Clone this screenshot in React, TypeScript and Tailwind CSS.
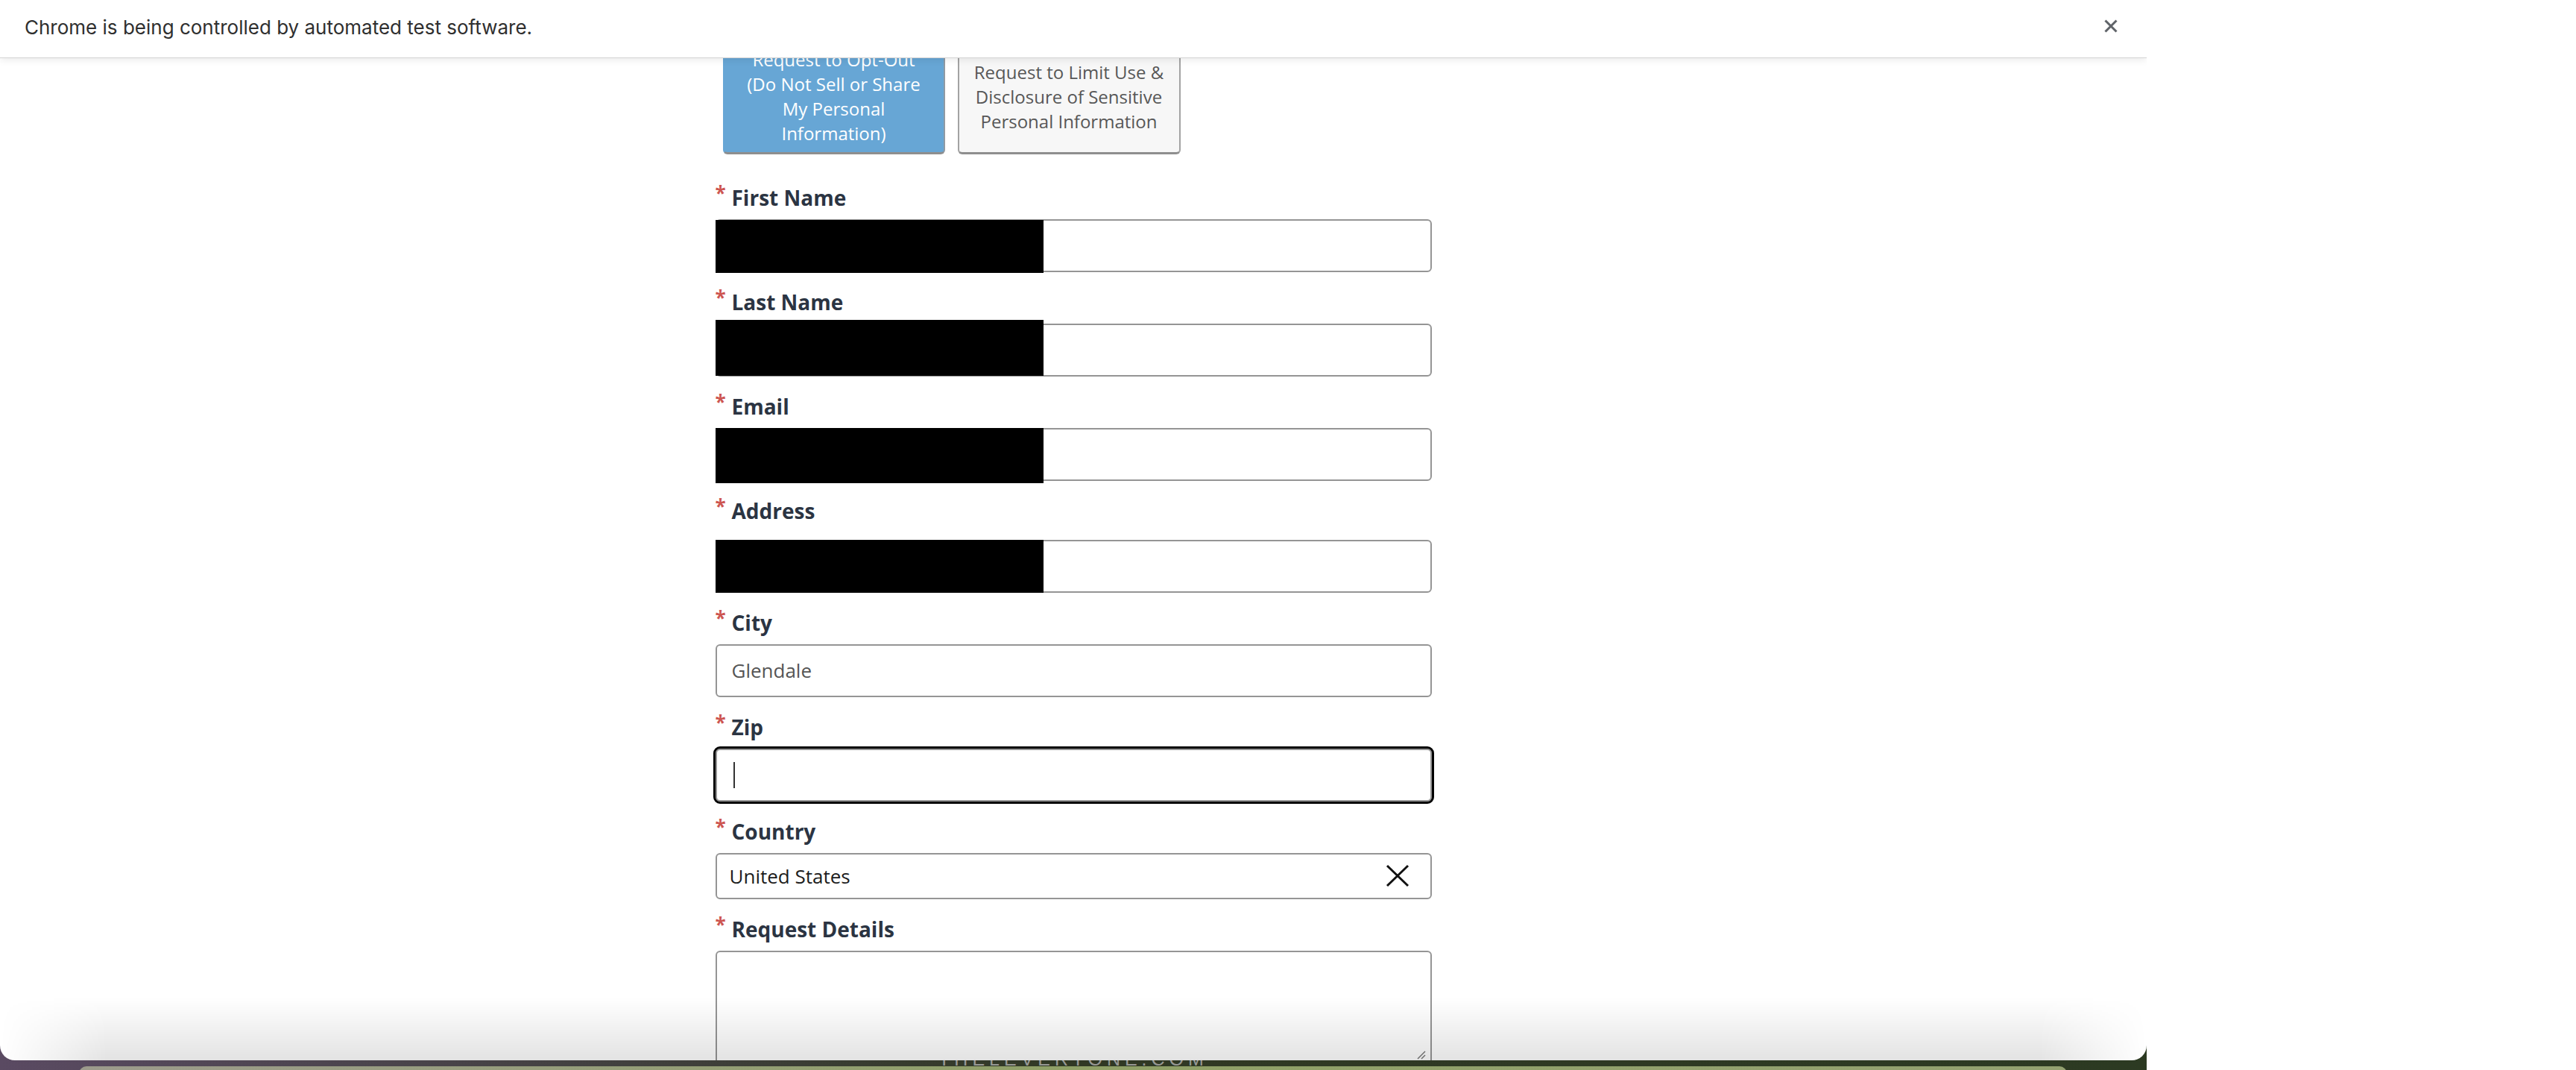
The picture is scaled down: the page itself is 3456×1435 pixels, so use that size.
import React from "react"

type Field = {
  label: string
  kind: "redacted" | "text" | "focus" | "select" | "textarea"
  value?: string
  gap?: number
  redact?: string
}

const fields: Field[] = [
  { label: "First Name", kind: "redacted", redact: "top-[-1px] bottom-[-3px]" },
  { label: "Last Name", kind: "redacted", redact: "top-[-7px] bottom-[-1px]" },
  { label: "Email", kind: "redacted", redact: "top-[-2px] bottom-[-5px]" },
  { label: "Address", kind: "redacted", gap: 19, redact: "top-[-2px] bottom-[-2px]" },
  { label: "City", kind: "text", value: "Glendale" },
  { label: "Zip", kind: "focus" },
  { label: "Country", kind: "select", value: "United States" },
  { label: "Request Details", kind: "textarea" },
]

function Label({ text }: { text: string }) {
  return (
    <div className="h-[40px] leading-[40px] text-[28px] font-bold text-[#2b3442] whitespace-nowrap">
      <span className="relative top-[-7px] inline-block w-[22px] text-[26px] font-bold text-[#cd5651]">*</span>
      {text}
    </div>
  )
}

function Control({ field }: { field: Field }) {
  const box = "relative w-full rounded-[6px] border-2 border-[#959595] bg-white"
  if (field.kind === "redacted") {
    return (
      <div className={`${box} h-[71px]`}>
        <div className={`absolute left-[-2px] w-[440px] bg-black ${field.redact}`} />
      </div>
    )
  }
  if (field.kind === "text") {
    return (
      <div className={`${box} h-[71px] flex items-center pl-[20px] text-[26px] text-[#555555]`}>{field.value}</div>
    )
  }
  if (field.kind === "focus") {
    return (
      <div className={`${box} h-[71px] flex items-center pl-[22px] outline-[3px] outline-solid outline-black`}>
        <div className="w-[2px] h-[35px] bg-[#333333]" />
      </div>
    )
  }
  if (field.kind === "select") {
    return (
      <div className={`${box} h-[62px] flex items-center justify-between pl-[17px] pr-[28px] text-[26px] text-[#1c1c1c]`}>
        <span>{field.value}</span>
        <svg width="32" height="31" viewBox="0 0 32 31" className="mt-[-2px]">
          <line x1="2" y1="2" x2="30" y2="29" stroke="#111" strokeWidth="3" />
          <line x1="30" y1="2" x2="2" y2="29" stroke="#111" strokeWidth="3" />
        </svg>
      </div>
    )
  }
  return (
    <div className={`${box} h-[220px]`}>
      <svg width="12" height="12" viewBox="0 0 12 12" className="absolute right-[6px] top-[132px]">
        <line x1="11" y1="1" x2="1" y2="11" stroke="#777" strokeWidth="1.5" />
        <line x1="11" y1="6" x2="6" y2="11" stroke="#777" strokeWidth="1.5" />
      </svg>
    </div>
  )
}

export default function App() {
  return (
    <div className="flex w-[3456px] h-[1435px] bg-white overflow-hidden font-['Open_Sans',sans-serif]">
      <div className="relative w-[2880px] h-full flex flex-col bg-linear-to-r from-[#5a4a62] via-[#303824] to-[#2c3a22]">
        {/* browser window */}
        <div className="relative h-[1422px] shrink-0 flex flex-col bg-white rounded-b-[20px] overflow-hidden">
          <div className="relative z-10 h-[78px] shrink-0 flex items-center justify-between pl-[33px] pr-[39px] pb-[5px] bg-white border-b border-[#d4d4d4] shadow-[0_2px_10px_rgba(0,0,0,0.09)]">
            <span className="font-['Inter',sans-serif] text-[26px] text-[#2f2f2f]">
              Chrome is being controlled by automated test software.
            </span>
            <svg width="18" height="18" viewBox="0 0 18 18" className="mb-[2px]">
              <line x1="1.5" y1="1.5" x2="16.5" y2="16.5" stroke="#5f6368" strokeWidth="3" />
              <line x1="16.5" y1="1.5" x2="1.5" y2="16.5" stroke="#5f6368" strokeWidth="3" />
            </svg>
          </div>

          <div className="flex-1 overflow-hidden">
            <div className="w-[961px] mx-auto mt-[-29px]">
              <div className="flex gap-[17px] ml-[10px] text-[24px] leading-[33px] text-center">
                <div className="w-[298px] flex items-center justify-center rounded-[6px] border-2 border-b-[3px] border-[#67a6d5] border-r-[#8f9aa4] border-b-[#8e8e8e] bg-[#67a6d5] pt-[12px] pb-[9px] text-white">
                  <div>
                    Request to Opt-Out
                    <br />
                    (Do Not Sell or Share
                    <br />
                    My Personal
                    <br />
                    Information)
                  </div>
                </div>
                <div className="w-[299px] flex items-center justify-center rounded-[6px] border-2 border-b-[3px] border-[#a3a3a3] border-b-[#8e8e8e] bg-[#f7f7f7] pt-[4px] text-[#575757]">
                  <div>
                    Request to Limit Use &amp;
                    <br />
                    Disclosure of Sensitive
                    <br />
                    Personal Information
                  </div>
                </div>
              </div>

              <div className="mt-[38px] flex flex-col gap-[20px]">
                {fields.map((f) => (
                  <div key={f.label} className="flex flex-col">
                    <Label text={f.label} />
                    <div className={f.gap ? "mt-[19px]" : "mt-[9px]"}>
                      <Control field={f} />
                    </div>
                  </div>
                ))}
              </div>
            </div>
          </div>

          {/* bottom fade over the window */}
          <div className="pointer-events-none absolute inset-x-0 bottom-0 h-[85px] bg-linear-to-b from-black/0 to-black/[0.11] [mask-image:linear-gradient(to_right,transparent,black_5%,black_95%,transparent)]" />
        </div>

        {/* desktop wallpaper peeking below */}
        <div className="flex-1 relative overflow-hidden">
          <div className="h-[8px] overflow-hidden flex justify-center">
            <span className="mt-[-17px] text-[25px] leading-[30px] tracking-[6px] text-[#b4b4b4]/80 font-['Liberation_Sans',sans-serif]">
              THELEVERTONE.COM
            </span>
          </div>
          <div className="ml-[106px] mr-[107px] h-[10px] rounded-t-[12px] bg-linear-to-r from-[#9c9a8c] via-[#8fa066] to-[#93a170]" />
        </div>
      </div>
      <div className="flex-1" />
    </div>
  )
}
